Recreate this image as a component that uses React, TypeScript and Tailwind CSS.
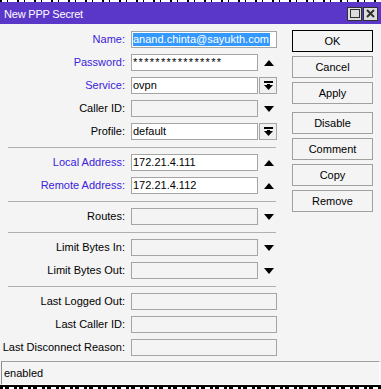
import React from "react";

const BLUE = "text-[#3b22dc]";

function UpArrow() {
  return (
    <svg width="10" height="6" viewBox="0 0 10 6">
      <polygon points="0,6 5,0 10,6" fill="#000" />
    </svg>
  );
}

function DownArrow() {
  return (
    <svg width="10" height="6" viewBox="0 0 10 6">
      <polygon points="0,0 10,0 5,6" fill="#000" />
    </svg>
  );
}

function DropBtn() {
  return (
    <div className="ml-[1px] flex h-[17px] w-[18px] items-center justify-center border border-[#a5a5a5] bg-[#f0f0f0]">
      <svg width="9" height="9" viewBox="0 0 9 9">
        <rect x="0" y="0" width="9" height="2" fill="#000" />
        <rect x="3" y="3" width="3" height="2" fill="#000" />
        <polygon points="0,4 9,4 4.5,9" fill="#000" />
      </svg>
    </div>
  );
}

type Ctl = "none" | "up" | "down" | "drop";

function Row({
  label,
  blue,
  value,
  disabled,
  ctl = "none",
  wide,
  children,
}: {
  label: string;
  blue?: boolean;
  value?: string;
  disabled?: boolean;
  ctl?: Ctl;
  wide?: boolean;
  children?: React.ReactNode;
}) {
  return (
    <div className="flex h-[17px] items-center">
      <div
        className={`w-[125px] whitespace-nowrap text-right leading-[17px] ${
          blue ? BLUE : "text-black"
        }`}
      >
        {label}
      </div>
      <div
        className={`ml-[6px] h-[17px] border border-[#a5a5a5] px-[1px] leading-[15px] text-black ${
          wide ? "w-[146px]" : "w-[127px]"
        } ${disabled ? "bg-[#f4f4f4]" : "bg-white"}`}
      >
        {children ?? value}
      </div>
      {!wide && (
        <div className="flex w-[19px] items-center justify-center">
          {ctl === "up" && (
            <div className="pl-[2px]">
              <UpArrow />
            </div>
          )}
          {ctl === "down" && (
            <div className="pl-[2px]">
              <DownArrow />
            </div>
          )}
          {ctl === "drop" && <DropBtn />}
        </div>
      )}
    </div>
  );
}

function Sep() {
  return <div className="mb-[6px] ml-[8px] mt-[7px] h-px w-[268px] bg-[#b0b0b0]" />;
}

function Btn({ children, def }: { children: React.ReactNode; def?: boolean }) {
  return (
    <div
      className={`flex h-[22px] w-[81px] items-center justify-center border bg-[#f4f4f4] text-black ${
        def ? "border-black" : "border-[#a0a0a0]"
      }`}
    >
      {children}
    </div>
  );
}

export default function App() {
  return (
    <div
      className="h-[389px] w-[381px] overflow-hidden bg-[#f4f4f4] text-[11px]"
      style={{ fontFamily: '"Liberation Sans", Arial, sans-serif' }}
    >
      <div className="h-[2px] bg-[repeating-linear-gradient(90deg,#000_0_2px,#fff_2px_7px,#000_7px_8px,#fff_8px_17px)]" />
      <div className="flex h-[22px] items-center justify-between bg-[#5b37c9] pl-[4px] pr-[3px]">
        <span className="pt-[2px] text-[11px] tracking-[-0.2px] text-white">New PPP Secret</span>
        <div className="flex gap-[1px] pt-[1px]">
          <div className="flex h-[14px] w-[15px] items-center justify-center border border-[#303030] bg-[#dcdcdc]">
            <div className="h-[9px] w-[10px] border-[1.5px] border-[#303030]" />
          </div>
          <div className="flex h-[14px] w-[15px] items-center justify-center border border-[#303030] bg-[#dcdcdc]">
            <svg width="9" height="9" viewBox="0 0 9 9">
              <path d="M1 1 L8 8 M8 1 L1 8" stroke="#303030" strokeWidth="2" />
            </svg>
          </div>
        </div>
      </div>

      <div className="flex">
        <div className="w-[277px] pt-[7px]">
          <div className="flex flex-col gap-[6px]">
            <Row label="Name:" blue wide>
              <span className="inline-block h-[13px] bg-[#3399ff] pr-[1px] leading-[13px] text-white">
                anand.chinta@sayukth.com
              </span>
            </Row>
            <Row label="Password:" blue ctl="up">
              <span className="tracking-[1.3px]">****************</span>
            </Row>
            <Row label="Service:" blue value="ovpn" ctl="drop" />
            <Row label="Caller ID:" disabled ctl="down" />
            <Row label="Profile:" value="default" ctl="drop" />
          </div>
          <Sep />
          <div className="flex flex-col gap-[6px]">
            <Row label="Local Address:" blue value="172.21.4.111" ctl="up" />
            <Row label="Remote Address:" blue value="172.21.4.112" ctl="up" />
          </div>
          <Sep />
          <Row label="Routes:" disabled ctl="down" />
          <Sep />
          <div className="flex flex-col gap-[6px]">
            <Row label="Limit Bytes In:" disabled ctl="down" />
            <Row label="Limit Bytes Out:" disabled ctl="down" />
          </div>
          <Sep />
          <div className="flex flex-col gap-[6px]">
            <Row label="Last Logged Out:" disabled wide />
            <Row label="Last Caller ID:" disabled wide />
            <Row label="Last Disconnect Reason:" disabled wide />
          </div>
        </div>

        <div className="ml-[15px] flex flex-col pt-[6px]">
          <div className="flex flex-col gap-[4px]">
            <Btn def>OK</Btn>
            <Btn>Cancel</Btn>
            <Btn>Apply</Btn>
          </div>
          <div className="mt-[8px] flex flex-col gap-[4px]">
            <Btn>Disable</Btn>
            <Btn>Comment</Btn>
            <Btn>Copy</Btn>
            <Btn>Remove</Btn>
          </div>
        </div>
      </div>

      <div className="mx-[1px] mt-[5px] flex h-[24px] items-center border-b border-l border-r border-t border-b-white border-l-[#8a8a8a] border-r-white border-t-[#a0a0a0] pl-[2px] text-black">
        enabled
      </div>
      <div className="h-[2px] bg-black" />
      <div className="h-[2px] bg-[repeating-linear-gradient(90deg,#000_0_3px,#fff_3px_5px,#000_5px_9px,#fff_9px_14px)]" />
    </div>
  );
}
